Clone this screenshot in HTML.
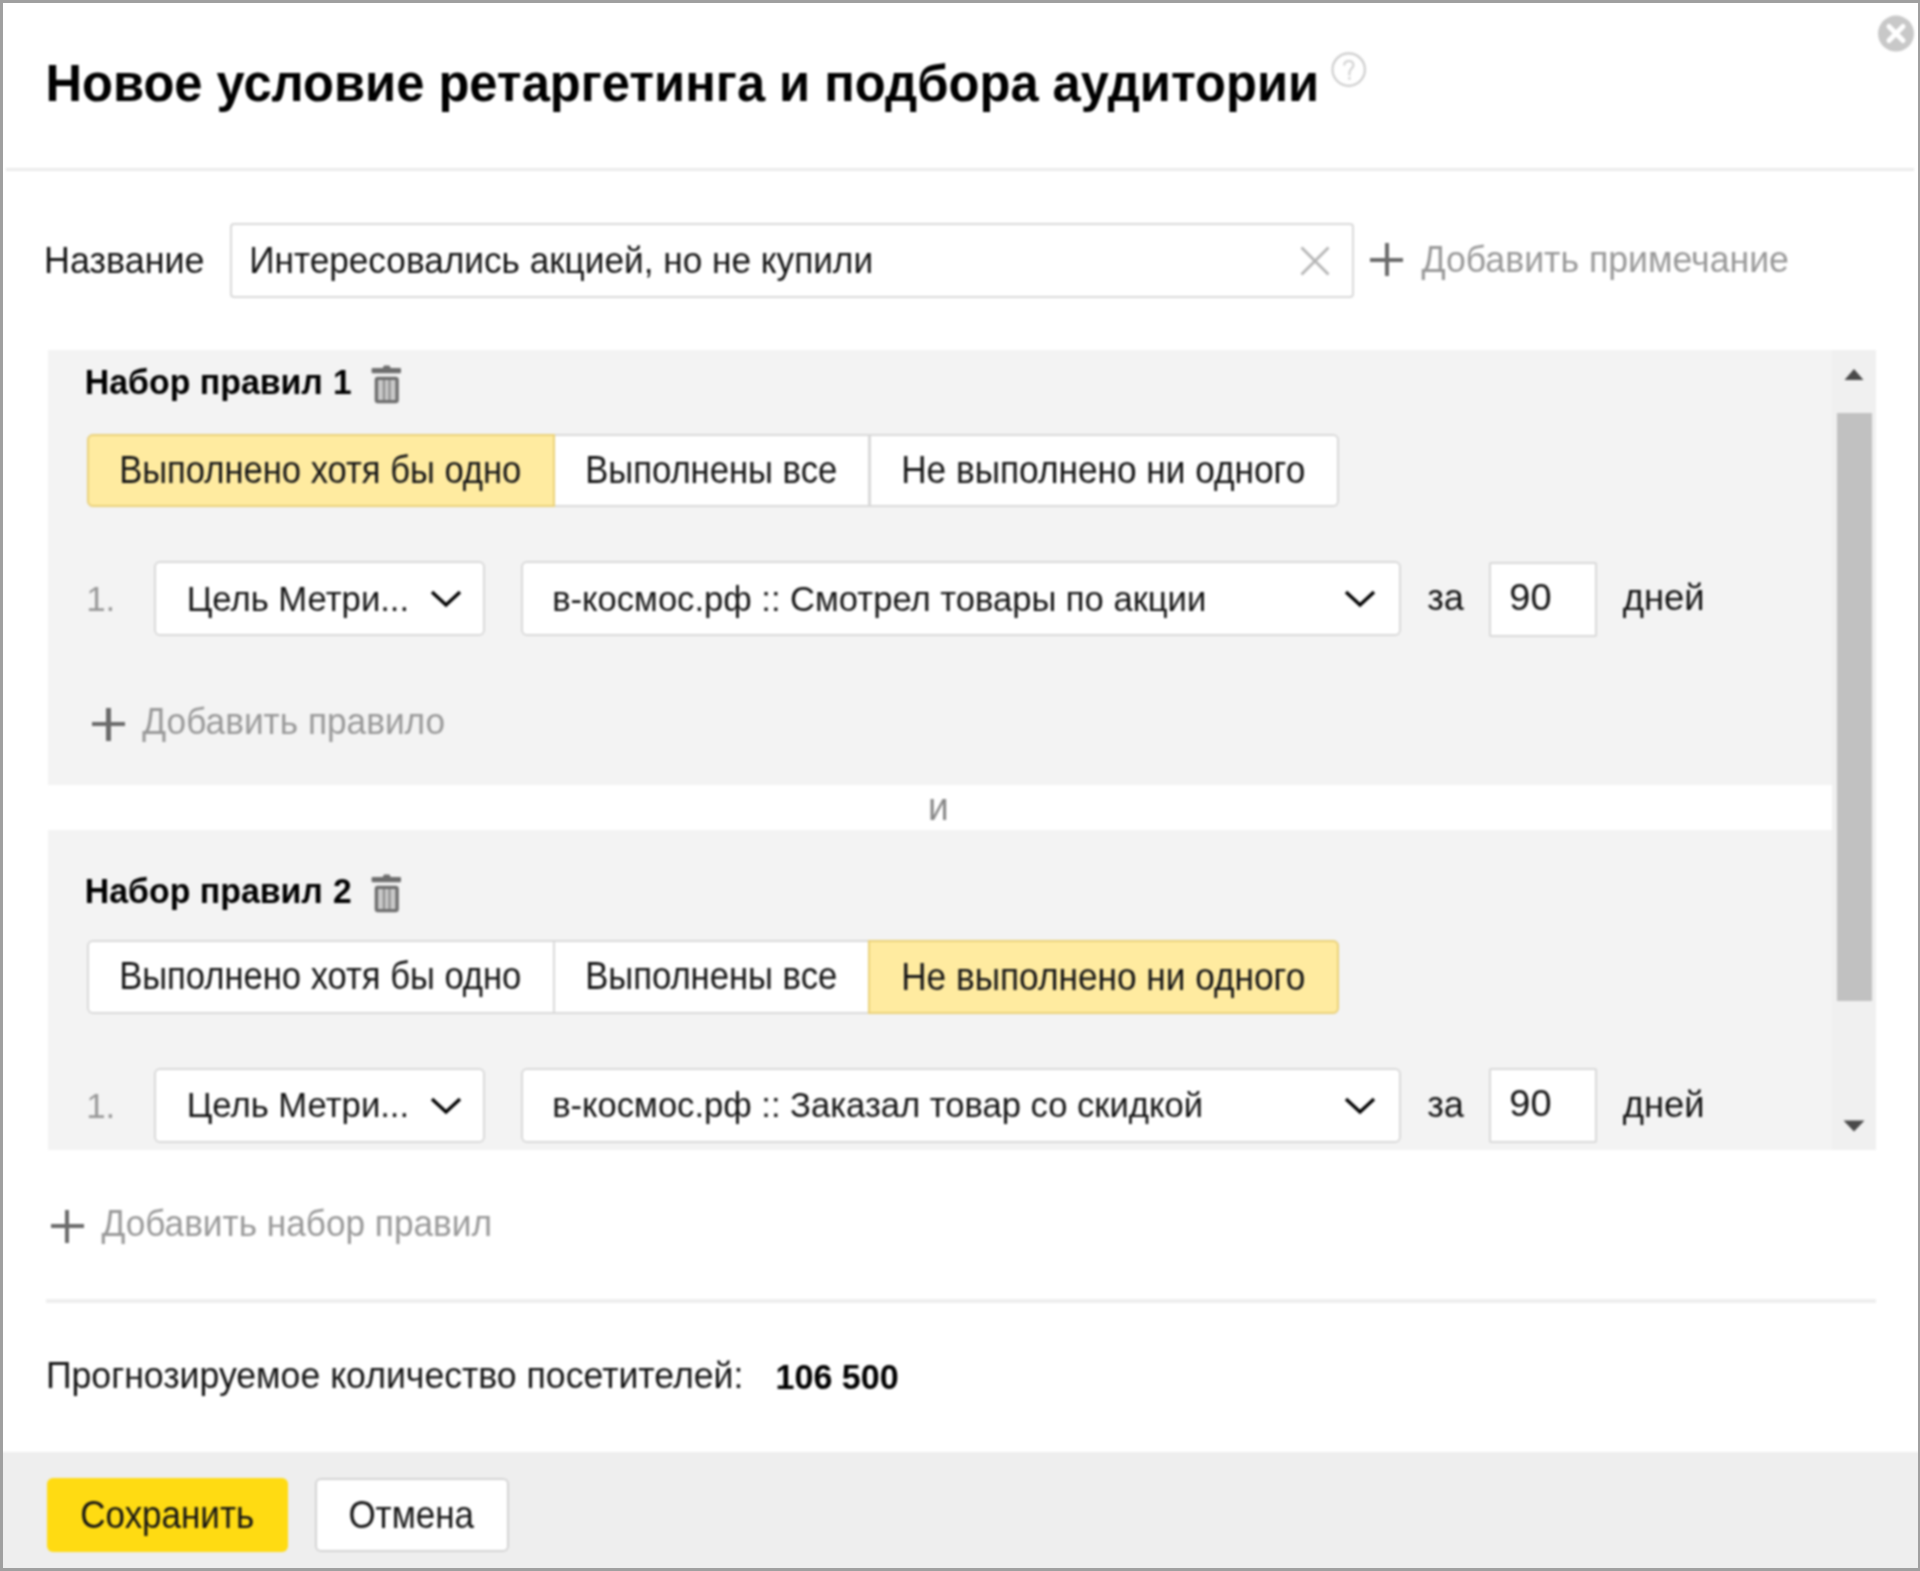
<!DOCTYPE html>
<html><head><meta charset="utf-8"><style>
html,body{margin:0;padding:0;}
body{width:1920px;height:1571px;position:relative;overflow:hidden;background:#fff;font-family:"Liberation Sans",sans-serif;}
#wrap{position:absolute;left:0;top:0;width:1920px;height:1571px;filter:blur(0.8px);}
</style></head><body><div id="wrap">
<div style="position:absolute;left:0.0px;top:1452.0px;width:1920.0px;height:119.0px;background:#eeeeee;"></div>
<div style="position:absolute;left:6.0px;top:167.5px;width:1908.0px;height:3.0px;background:#ebebeb;"></div>
<div style="position:absolute;left:45.45px;top:58.84px;font-size:50.63px;line-height:50.63px;font-weight:bold;color:#000;white-space:pre;transform:scaleY(1.03);transform-origin:0 42.86px;">Новое условие ретаргетинга и подбора аудитории</div>
<svg style="position:absolute;left:1330px;top:51px" width="38" height="38" viewBox="0 0 38 38"><circle cx="18.7" cy="18.6" r="16.2" fill="none" stroke="#cdcdcd" stroke-width="2.2"/><path d="M14.2 14.6 C14.2 11.6 16.2 10 18.8 10 C21.6 10 23.4 11.8 23.4 14.2 C23.4 17.2 19.4 17.8 19.4 21.6 L19.4 24.5" fill="none" stroke="#d2d2d2" stroke-width="2.2"/><circle cx="19.4" cy="27.4" r="1.4" fill="#d2d2d2"/></svg>
<svg style="position:absolute;left:1876px;top:14px" width="40" height="40" viewBox="0 0 40 40"><circle cx="20" cy="19.6" r="18" fill="#c8c8c8"/><path d="M13 12.5 L27 26.5 M27 12.5 L13 26.5" stroke="#fff" stroke-width="5" stroke-linecap="round"/></svg>
<div style="position:absolute;left:44.10px;top:242.59px;font-size:35.92px;line-height:35.92px;font-weight:normal;color:#151515;white-space:pre;transform:scaleY(1.03);transform-origin:0 30.41px;">Название</div>
<div style="position:absolute;left:229.5px;top:223.4px;width:1124.1px;height:75.0px;box-sizing:border-box;border:2.6px solid #d9d9d9;border-radius:4px;background:#fff;"></div>
<div style="position:absolute;left:249.20px;top:243.20px;font-size:35.20px;line-height:35.20px;font-weight:normal;color:#151515;white-space:pre;transform:scaleY(1.03);transform-origin:0 29.80px;">Интересовались акцией, но не купили</div>
<svg style="position:absolute;left:1298px;top:244px" width="34" height="34" viewBox="0 0 34 34"><path d="M3.5 3.5 L30.5 30.5 M30.5 3.5 L3.5 30.5" stroke="#b5b5b5" stroke-width="2.8"/></svg>
<div style="position:absolute;left:1370.3px;top:257.5px;width:33.0px;height:4.6px;background:#6b6b6b;"></div>
<div style="position:absolute;left:1384.5px;top:243.3px;width:4.6px;height:33.0px;background:#6b6b6b;"></div>
<div style="position:absolute;left:1421.40px;top:242.80px;font-size:35.67px;line-height:35.67px;font-weight:normal;color:#999;white-space:pre;transform:scaleY(1.03);transform-origin:0 30.20px;">Добавить примечание</div>
<div style="position:absolute;left:47.5px;top:350.0px;width:1784.5px;height:435.4px;background:#f3f3f3;"></div>
<div style="position:absolute;left:47.5px;top:830.0px;width:1784.5px;height:320.0px;background:#f3f3f3;"></div>
<div style="position:absolute;left:1832.0px;top:350.0px;width:44.0px;height:800.0px;background:#f0f0f0;"></div>
<div style="position:absolute;left:1837.4px;top:412.6px;width:34.8px;height:588.7px;background:#c1c1c1;"></div>
<svg style="position:absolute;left:1840px;top:365px" width="28" height="20" viewBox="0 0 28 20"><path d="M4.5 15 L14 4 L23.5 15 Z" fill="#4a4a4a"/></svg>
<svg style="position:absolute;left:1840px;top:1116px" width="28" height="20" viewBox="0 0 28 20"><path d="M3.5 4.5 L14 15.5 L24.5 4.5 Z" fill="#4a4a4a"/></svg>
<div style="position:absolute;left:84.80px;top:365.93px;font-size:33.87px;line-height:33.87px;font-weight:bold;color:#000;white-space:pre;transform:scaleY(1.03);transform-origin:0 28.67px;">Набор правил</div>
<div style="position:absolute;left:332.90px;top:366.16px;font-size:33.60px;line-height:33.60px;font-weight:bold;color:#000;white-space:pre;transform:scaleY(1.03);transform-origin:0 28.44px;">1</div>
<svg style="position:absolute;left:371px;top:363px" width="32" height="42" viewBox="0 0 32 42"><path d="M11.6 5.2 L13 2.4 L18.4 2.4 L19.8 5.2 Z" fill="#6e6e6e"/><rect x="0.6" y="5" width="29.4" height="5.2" rx="1.2" fill="#6e6e6e"/><rect x="5.4" y="15.4" width="20.7" height="23.2" rx="1.5" fill="#c9c9c9" stroke="#6e6e6e" stroke-width="3.4"/><rect x="11.9" y="17" width="2.2" height="20" fill="#8e8e8e"/><rect x="17.4" y="17" width="2.2" height="20" fill="#8e8e8e"/></svg>
<div style="position:absolute;left:87.0px;top:433.7px;width:1251.8px;height:73.8px;box-sizing:border-box;border:2.6px solid #d9d9d9;border-radius:6px;background:#fff;"></div>
<div style="position:absolute;left:552.7px;top:433.7px;width:2.6px;height:73.8px;background:#d9d9d9;"></div>
<div style="position:absolute;left:868.1px;top:433.7px;width:2.6px;height:73.8px;background:#d9d9d9;"></div>
<div style="position:absolute;left:87.0px;top:433.7px;width:468.3px;height:73.8px;box-sizing:border-box;border:2.6px solid #ebd27a;background:#ffeba0;border-radius:6px 0 0 6px;"></div>
<div style="position:absolute;left:119.20px;top:453.73px;font-size:34.57px;line-height:34.57px;font-weight:normal;color:#151515;white-space:pre;transform:scaleY(1.1);transform-origin:0 29.27px;">Выполнено хотя бы одно</div>
<div style="position:absolute;left:585.20px;top:453.68px;font-size:34.63px;line-height:34.63px;font-weight:normal;color:#151515;white-space:pre;transform:scaleY(1.1);transform-origin:0 29.32px;">Выполнены все</div>
<div style="position:absolute;left:901.20px;top:453.19px;font-size:35.22px;line-height:35.22px;font-weight:normal;color:#151515;white-space:pre;transform:scaleY(1.1);transform-origin:0 29.81px;">Не выполнено ни одного</div>
<div style="position:absolute;left:86.15px;top:581.37px;font-size:35.00px;line-height:35.00px;font-weight:normal;color:#999;white-space:pre;transform:scaleY(1.0);transform-origin:0 29.63px;">1.</div>
<div style="position:absolute;left:153.8px;top:561.0px;width:331.2px;height:75.0px;box-sizing:border-box;border:2.6px solid #d9d9d9;border-radius:6px;background:#fff;"></div>
<div style="position:absolute;left:186.70px;top:581.66px;font-size:34.66px;line-height:34.66px;font-weight:normal;color:#151515;white-space:pre;transform:scaleY(1.0);transform-origin:0 29.34px;">Цель Метри...</div>
<svg style="position:absolute;left:429.5px;top:589px" width="32" height="20" viewBox="0 0 32 20"><path d="M2 3 L16 16 L30 3" fill="none" stroke="#000" stroke-width="3.4"/></svg>
<div style="position:absolute;left:520.6px;top:561.0px;width:880.4px;height:75.0px;box-sizing:border-box;border:2.6px solid #d9d9d9;border-radius:6px;background:#fff;"></div>
<div style="position:absolute;left:552.20px;top:581.71px;font-size:34.60px;line-height:34.60px;font-weight:normal;color:#151515;white-space:pre;transform:scaleY(1.0);transform-origin:0 29.29px;">в-космос.рф :: Смотрел товары по акции</div>
<svg style="position:absolute;left:1343.5px;top:589px" width="32" height="20" viewBox="0 0 32 20"><path d="M2 3 L16 16 L30 3" fill="none" stroke="#000" stroke-width="3.4"/></svg>
<div style="position:absolute;left:1427.20px;top:580.31px;font-size:36.25px;line-height:36.25px;font-weight:normal;color:#151515;white-space:pre;transform:scaleY(1.0);transform-origin:0 30.69px;">за</div>
<div style="position:absolute;left:1489.0px;top:561.5px;width:107.7px;height:75.1px;box-sizing:border-box;border:2.6px solid #d9d9d9;border-radius:2px;background:#fff;"></div>
<div style="position:absolute;left:1509.30px;top:578.89px;font-size:37.94px;line-height:37.94px;font-weight:normal;color:#151515;white-space:pre;transform:scaleY(0.98);transform-origin:0 32.11px;">90</div>
<div style="position:absolute;left:1622.70px;top:580.23px;font-size:36.36px;line-height:36.36px;font-weight:normal;color:#151515;white-space:pre;transform:scaleY(1.0);transform-origin:0 30.77px;">дней</div>
<div style="position:absolute;left:92.0px;top:721.8px;width:33.0px;height:4.6px;background:#6b6b6b;"></div>
<div style="position:absolute;left:106.2px;top:707.6px;width:4.6px;height:33.0px;background:#6b6b6b;"></div>
<div style="position:absolute;left:142.30px;top:703.95px;font-size:35.26px;line-height:35.26px;font-weight:normal;color:#999;white-space:pre;transform:scaleY(1.03);transform-origin:0 29.85px;">Добавить правило</div>
<div style="position:absolute;left:928.10px;top:789.28px;font-size:37.00px;line-height:37.00px;font-weight:normal;color:#888;white-space:pre;transform:scaleY(1.06);transform-origin:0 31.32px;">и</div>
<div style="position:absolute;left:84.80px;top:874.83px;font-size:33.87px;line-height:33.87px;font-weight:bold;color:#000;white-space:pre;transform:scaleY(1.03);transform-origin:0 28.67px;">Набор правил</div>
<div style="position:absolute;left:332.90px;top:875.06px;font-size:33.60px;line-height:33.60px;font-weight:bold;color:#000;white-space:pre;transform:scaleY(1.03);transform-origin:0 28.44px;">2</div>
<svg style="position:absolute;left:371px;top:871.9px" width="32" height="42" viewBox="0 0 32 42"><path d="M11.6 5.2 L13 2.4 L18.4 2.4 L19.8 5.2 Z" fill="#6e6e6e"/><rect x="0.6" y="5" width="29.4" height="5.2" rx="1.2" fill="#6e6e6e"/><rect x="5.4" y="15.4" width="20.7" height="23.2" rx="1.5" fill="#c9c9c9" stroke="#6e6e6e" stroke-width="3.4"/><rect x="11.9" y="17" width="2.2" height="20" fill="#8e8e8e"/><rect x="17.4" y="17" width="2.2" height="20" fill="#8e8e8e"/></svg>
<div style="position:absolute;left:87.0px;top:940.2px;width:1251.8px;height:73.8px;box-sizing:border-box;border:2.6px solid #d9d9d9;border-radius:6px;background:#fff;"></div>
<div style="position:absolute;left:552.7px;top:940.2px;width:2.6px;height:73.8px;background:#d9d9d9;"></div>
<div style="position:absolute;left:868.1px;top:940.2px;width:2.6px;height:73.8px;background:#d9d9d9;"></div>
<div style="position:absolute;left:868.1px;top:940.2px;width:470.6px;height:73.8px;box-sizing:border-box;border:2.6px solid #ebd27a;background:#ffeba0;border-radius:0 6px 6px 0;"></div>
<div style="position:absolute;left:119.20px;top:960.23px;font-size:34.57px;line-height:34.57px;font-weight:normal;color:#151515;white-space:pre;transform:scaleY(1.1);transform-origin:0 29.27px;">Выполнено хотя бы одно</div>
<div style="position:absolute;left:585.20px;top:960.18px;font-size:34.63px;line-height:34.63px;font-weight:normal;color:#151515;white-space:pre;transform:scaleY(1.1);transform-origin:0 29.32px;">Выполнены все</div>
<div style="position:absolute;left:901.20px;top:959.69px;font-size:35.22px;line-height:35.22px;font-weight:normal;color:#151515;white-space:pre;transform:scaleY(1.1);transform-origin:0 29.81px;">Не выполнено ни одного</div>
<div style="position:absolute;left:86.15px;top:1087.87px;font-size:35.00px;line-height:35.00px;font-weight:normal;color:#999;white-space:pre;transform:scaleY(1.0);transform-origin:0 29.63px;">1.</div>
<div style="position:absolute;left:153.8px;top:1067.5px;width:331.2px;height:75.0px;box-sizing:border-box;border:2.6px solid #d9d9d9;border-radius:6px;background:#fff;"></div>
<div style="position:absolute;left:186.70px;top:1088.16px;font-size:34.66px;line-height:34.66px;font-weight:normal;color:#151515;white-space:pre;transform:scaleY(1.0);transform-origin:0 29.34px;">Цель Метри...</div>
<svg style="position:absolute;left:429.5px;top:1095.5px" width="32" height="20" viewBox="0 0 32 20"><path d="M2 3 L16 16 L30 3" fill="none" stroke="#000" stroke-width="3.4"/></svg>
<div style="position:absolute;left:520.6px;top:1067.5px;width:880.4px;height:75.0px;box-sizing:border-box;border:2.6px solid #d9d9d9;border-radius:6px;background:#fff;"></div>
<div style="position:absolute;left:552.20px;top:1088.21px;font-size:34.60px;line-height:34.60px;font-weight:normal;color:#151515;white-space:pre;transform:scaleY(1.0);transform-origin:0 29.29px;">в-космос.рф :: Заказал товар со скидкой</div>
<svg style="position:absolute;left:1343.5px;top:1095.5px" width="32" height="20" viewBox="0 0 32 20"><path d="M2 3 L16 16 L30 3" fill="none" stroke="#000" stroke-width="3.4"/></svg>
<div style="position:absolute;left:1427.20px;top:1086.81px;font-size:36.25px;line-height:36.25px;font-weight:normal;color:#151515;white-space:pre;transform:scaleY(1.0);transform-origin:0 30.69px;">за</div>
<div style="position:absolute;left:1489.0px;top:1068.0px;width:107.7px;height:75.1px;box-sizing:border-box;border:2.6px solid #d9d9d9;border-radius:2px;background:#fff;"></div>
<div style="position:absolute;left:1509.30px;top:1085.39px;font-size:37.94px;line-height:37.94px;font-weight:normal;color:#151515;white-space:pre;transform:scaleY(0.98);transform-origin:0 32.11px;">90</div>
<div style="position:absolute;left:1622.70px;top:1086.73px;font-size:36.36px;line-height:36.36px;font-weight:normal;color:#151515;white-space:pre;transform:scaleY(1.0);transform-origin:0 30.77px;">дней</div>
<div style="position:absolute;left:0.0px;top:1150.0px;width:1832.0px;height:50.0px;background:#fff;"></div>
<div style="position:absolute;left:50.6px;top:1223.9px;width:33.0px;height:4.6px;background:#6b6b6b;"></div>
<div style="position:absolute;left:64.8px;top:1209.7px;width:4.6px;height:33.0px;background:#6b6b6b;"></div>
<div style="position:absolute;left:101.40px;top:1206.20px;font-size:35.21px;line-height:35.21px;font-weight:normal;color:#999;white-space:pre;transform:scaleY(1.03);transform-origin:0 29.80px;">Добавить набор правил</div>
<div style="position:absolute;left:46.0px;top:1298.5px;width:1830.0px;height:4.0px;background:#eeeeee;"></div>
<div style="position:absolute;left:45.95px;top:1359.04px;font-size:35.63px;line-height:35.63px;font-weight:normal;color:#151515;white-space:pre;transform:scaleY(1.03);transform-origin:0 30.16px;">Прогнозируемое количество посетителей:</div>
<div style="position:absolute;left:775.60px;top:1360.38px;font-size:34.04px;line-height:34.04px;font-weight:bold;color:#000;white-space:pre;transform:scaleY(1.03);transform-origin:0 28.82px;">106 500</div>
<div style="position:absolute;left:47.0px;top:1478.0px;width:240.8px;height:74.4px;background:#ffdb12;border-radius:6px;"></div>
<div style="position:absolute;left:80.30px;top:1498.38px;font-size:34.99px;line-height:34.99px;font-weight:normal;color:#151515;white-space:pre;transform:scaleY(1.12);transform-origin:0 29.62px;">Сохранить</div>
<div style="position:absolute;left:315.0px;top:1478.0px;width:194.0px;height:73.5px;box-sizing:border-box;border:2.6px solid #d4d4d4;border-radius:6px;background:#fff;"></div>
<div style="position:absolute;left:348.40px;top:1498.37px;font-size:35.01px;line-height:35.01px;font-weight:normal;color:#151515;white-space:pre;transform:scaleY(1.12);transform-origin:0 29.63px;">Отмена</div>
</div><div style="position:absolute;left:0;top:0;width:1920px;height:1571px;box-sizing:border-box;border-style:solid;border-color:#a0a0a0;border-width:3px 2.6px 3.6px 3.3px;"></div>
</body></html>
